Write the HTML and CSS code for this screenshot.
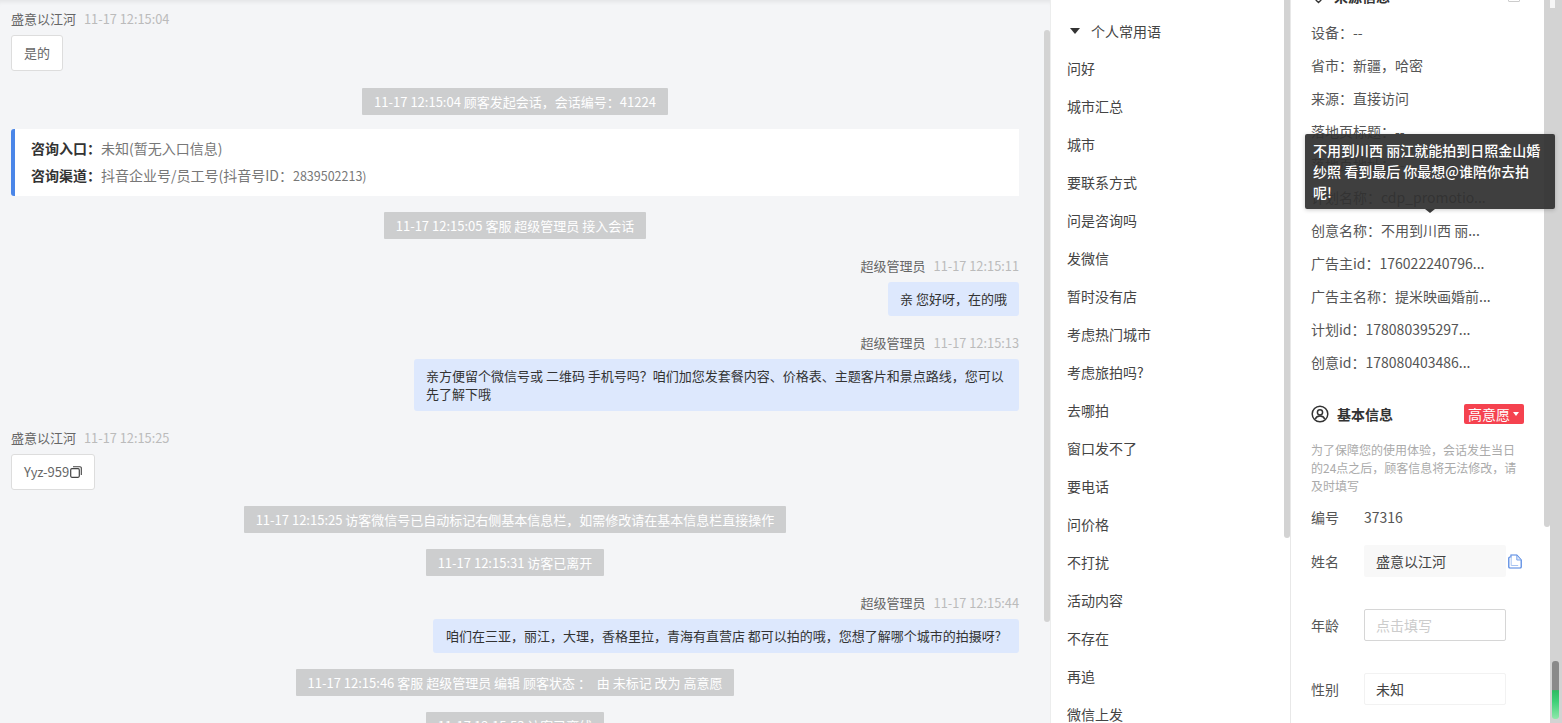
FILE: index.html
```html
<!DOCTYPE html>
<html lang="zh-CN">
<head>
<meta charset="utf-8">
<title>会话</title>
<link rel="stylesheet" href="styles.css">
</head>
<body>
<div class="app">
  <main class="chat">
    <div class="chat-scroll">
      <div class="who"><span class="name">盛意以江河</span><span class="time">11-17 12:15:04</span></div>
      <div class="row"><div class="bubble white">是的</div></div>
      <div class="sys sys-first"><span>11-17 12:15:04 顾客发起会话，会话编号：41224</span></div>
      <div class="entry">
        <p><b>咨询入口：</b>未知(暂无入口信息)</p>
        <p><b>咨询渠道：</b>抖音企业号/员工号(抖音号ID：<span class="num">2839502213)</span></p>
      </div>
      <div class="sys sys-b"><span>11-17 12:15:05 客服 超级管理员 接入会话</span></div>
      <div class="who right w1"><span class="name">超级管理员</span><span class="time">11-17 12:15:11</span></div>
      <div class="row right"><div class="bubble blue">亲 您好呀，在的哦</div></div>
      <div class="who right w2"><span class="name">超级管理员</span><span class="time">11-17 12:15:13</span></div>
      <div class="row right"><div class="bubble blue long">亲方便留个微信号或 二维码 手机号吗？咱们加您发套餐内容、价格表、主题客片和景点路线，您可以先了解下哦</div></div>
      <div class="who w3"><span class="name">盛意以江河</span><span class="time">11-17 12:15:25</span></div>
      <div class="row"><div class="bubble white">Yyz-959<svg class="copy" viewBox="0 0 12 12" width="12" height="12"><rect x="0.7" y="2.7" width="8.6" height="8.6" rx="1.2" fill="none" stroke="#444" stroke-width="1.2"/><path d="M3 .7h7a1.3 1.3 0 0 1 1.3 1.3v7" fill="none" stroke="#444" stroke-width="1.1"/></svg></div></div>
      <div class="sys sys-c"><span>11-17 12:15:25 访客微信号已自动标记右侧基本信息栏，如需修改请在基本信息栏直接操作</span></div>
      <div class="sys sys-d"><span>11-17 12:15:31 访客已离开</span></div>
      <div class="who right w4"><span class="name">超级管理员</span><span class="time">11-17 12:15:44</span></div>
      <div class="row right"><div class="bubble blue trail">咱们在三亚，丽江，大理，香格里拉，青海有直营店 都可以拍的哦，您想了解哪个城市的拍摄呀?</div></div>
      <div class="sys sys-e"><span>11-17 12:15:46 客服 超级管理员 编辑 顾客状态 ：&nbsp; 由 未标记 改为 高意愿</span></div>
      <div class="sys sys-d"><span>11-17 12:15:53 访客已离线</span></div>
    </div>
    <div class="bar bar-chat"></div>
  </main>

  <aside class="phrases">
    <div class="ph-head"><i class="caret"></i>个人常用语</div>
    <ul class="ph-list">
      <li>问好</li><li>城市汇总</li><li>城市</li><li>要联系方式</li><li>问是咨询吗</li><li>发微信</li><li>暂时没有店</li><li>考虑热门城市</li><li>考虑旅拍吗?</li><li>去哪拍</li><li>窗口发不了</li><li>要电话</li><li>问价格</li><li>不打扰</li><li>活动内容</li><li>不存在</li><li>再追</li><li>微信上发</li>
    </ul>
  </aside>
  <div class="gutter"><div class="thumb"></div></div>

  <section class="info">
    <div class="info-scroll">
      <h3 class="info-title cut"><svg viewBox="0 0 16 16" width="15" height="15"><path d="M8 1.5a5 5 0 0 1 5 5c0 3.500-5 8-5 8s-5-4.500-5-8a5 5 0 0 1 5-5z" fill="none" stroke="#333" stroke-width="1.500"/></svg>来源信息<i class="mini"></i></h3>
      <dl class="facts">
        <div><dt>设备：</dt><dd>--</dd></div>
        <div><dt>省市：</dt><dd>新疆，哈密</dd></div>
        <div><dt>来源：</dt><dd>直接访问</dd></div>
        <div><dt>落地页标题：</dt><dd>--</dd></div>
        <div><dt>落地页地址：</dt><dd>--</dd></div>
        <div><dt>计划名称：</dt><dd>cdp_promotio...</dd></div>
        <div><dt>创意名称：</dt><dd>不用到川西 丽...</dd></div>
        <div><dt>广告主id：</dt><dd>176022240796...</dd></div>
        <div><dt>广告主名称：</dt><dd>提米映画婚前...</dd></div>
        <div><dt>计划id：</dt><dd>178080395297...</dd></div>
        <div><dt>创意id：</dt><dd>178080403486...</dd></div>
      </dl>
      <div class="basic-head">
        <h3 class="info-title"><svg viewBox="0 0 18 18" width="18" height="18"><circle cx="9" cy="9" r="7.800" fill="none" stroke="#333" stroke-width="1.500"/><circle cx="9" cy="7.300" r="2.600" fill="none" stroke="#333" stroke-width="1.500"/><path d="M4.300 14c.8-2.200 2.500-3 4.700-3s3.900.8 4.700 3" fill="none" stroke="#333" stroke-width="1.500"/></svg>基本信息</h3>
        <span class="tag">高意愿<i></i></span>
      </div>
      <p class="hint">为了保障您的使用体验，会话发生当日的24点之后，顾客信息将无法修改，请及时填写</p>
      <div class="field plain"><label>编号</label><span>37316</span></div>
      <div class="field"><label>姓名</label><div class="input filled">盛意以江河</div><svg class="doc" viewBox="0 0 14 15" width="14" height="15"><path d="M3 3H1.800a1 1 0 0 0-1 1v9a1 1 0 0 0 1 1h10.400a1 1 0 0 0 1-1V6L8.800 1H3z" fill="#fff" stroke="#4a80e0" stroke-width="1.200"/><path d="M3.200 1.500v10h7" fill="none" stroke="#a9c4f1" stroke-width="1"/><path d="M8.800 1.500v4.500h4.200" fill="#dce8fb" stroke="#7ea6ea" stroke-width="1"/></svg></div>
      <div class="field"><label>年龄</label><div class="input empty">点击填写</div></div>
      <div class="field"><label>性别</label><div class="input soft">未知</div></div>
    </div>
    <div class="bar bar-info"></div>
    <div class="tip">不用到川西 丽江就能拍到日照金山婚纱照 看到最后 你最想@谁陪你去拍呢!</div>
  </section>
  <div class="rail"><i class="rail-top"></i><div class="meter"></div></div>
</div>
</body>
</html>
```
FILE: styles.css
```css
* { box-sizing: border-box; margin: 0; padding: 0; }
html, body { height: 100%; overflow: hidden; }
body { font-family: "Noto Sans CJK SC", "Open Sans", sans-serif; font-size: 13px; color: #333; background: #fff; }
.app { display: flex; height: 723px; width: 1562px; overflow: hidden; }

.chat { width: 1051px; flex: none; background: #f4f5f7; position: relative; overflow: hidden; border-right: 1px solid #eceded; box-shadow: inset 0 5px 4px -3px rgba(0,0,0,.07); }
.chat-scroll { padding: 10px 31px 0 11px; }
.bar { position: absolute; width: 6px; background: #d3d3d3; border-radius: 0 0 3px 3px; }
.bar-chat { left: 1044px; top: 30px; height: 592px; border-radius: 3px; }

.who { height: 18px; line-height: 18px; font-size: 13px; display: flex; gap: 8px; }
.who.right { justify-content: flex-end; }
.name { color: #666; }
.time { color: #bbb; font-size: 12.800px; }
.row { display: flex; margin-top: 7px; }
.row.right { justify-content: flex-end; }
.bubble { font-size: 13px; line-height: 18px; color: #333; padding: 8px 12px; border-radius: 3px; display: flex; align-items: center; }
.bubble.white { background: #fff; border: 1px solid #ddd; color: #666; padding: 8px 12px; height: 36px; }
.bubble.blue { background: #dde8fd; }
.bubble.long { width: 605px; }
.bubble.trail { padding: 8px 18px 8px 13px; }
.copy { margin-left: 1px; }

.sys { display: flex; justify-content: center; }
.sys span { background: #cdcecf; color: #fff; font-size: 13px; line-height: 27px; height: 27px; padding: 0 12px; border-radius: 1px; white-space: nowrap; }
.sys-first { margin-top: 17px; }
.sys-b { margin-top: 16px; }
.sys-c { margin-top: 16px; }
.sys-d { margin-top: 16px; }
.sys-e { margin-top: 16px; }

.entry { margin-top: 14px; height: 67px; background: #fff; border-left: 4px solid #4a86e8; border-radius: 3px 0 0 3px; padding: 6px 0 0 16px; font-size: 14px; color: #777; line-height: 27px; }
.entry b { color: #333; font-weight: 700; }
.num { font-size: 12.500px; }
.w1 { margin-top: 18px; }
.w2 { margin-top: 18px; }
.w3 { margin-top: 18px; }
.w4 { margin-top: 18px; }

.phrases { width: 233px; flex: none; background: #fff; padding: 21px 0 0 16px; overflow: hidden; }
.ph-head { height: 20px; line-height: 20px; padding-left: 24px; position: relative; font-size: 14px; color: #444; }
.caret { position: absolute; left: 3px; top: 7px; border: 5.500px solid transparent; border-top: 6px solid #333; border-bottom: 0; }
.ph-list { list-style: none; margin-top: 8px; }
.ph-list li { height: 38px; line-height: 38px; font-size: 14px; color: #444; white-space: nowrap; }

.gutter { width: 7px; flex: none; background: #fff; border-right: 1px solid #e8e8e8; }
.gutter .thumb { width: 6px; height: 538px; background: #d3d3d3; border-radius: 0 0 3px 3px; }

.info { width: 259px; flex: none; background: #fff; position: relative; z-index: 2; }
.info-scroll { padding: 0 0 0 20px; margin-top: -14px; }
.info-title { font-size: 14px; font-weight: 700; color: #333; display: flex; align-items: center; gap: 8px; height: 20px; line-height: 20px; }
.cut { margin-bottom: 10px; position: relative; }
.mini { position: absolute; left: 197px; top: 11px; width: 12px; height: 5px; border: 1px solid #ccc; border-radius: 1px; }
.facts div { display: flex; height: 33px; line-height: 33px; font-size: 14px; color: #555; white-space: nowrap; }
.facts dd { color: #555; }
.basic-head { display: flex; justify-content: space-between; align-items: center; margin-top: 24px; height: 22px; padding-right: 26px; }
.tag { background: #f5424f; color: #fff; border-radius: 2px; font-size: 14px; height: 20px; line-height: 20px; padding: 0 5px 0 4px; display: flex; align-items: center; }
.tag i { margin-left: 3px; border: 3.500px solid transparent; border-top: 4px solid #fff; border-bottom: 0; }
.hint { font-size: 12px; line-height: 18px; color: #aaa; width: 206px; margin-top: 16px; }
.field { display: flex; align-items: center; height: 34px; margin-top: 30px; font-size: 14px; color: #555; }
.field label { width: 53px; flex: none; }
.field.plain { margin-top: 9px; height: 26px; }
.field.plain + .field { margin-top: 14px; }
.input { width: 142px; height: 32px; line-height: 30px; padding-left: 11px; border-radius: 2px; border: 1px solid transparent; font-size: 14px; color: #444; }
.input.filled { background: #f8f8f8; }
.input.empty { border-color: #d6d6d6; color: #ccc; }
.input.soft { border-color: #f2f2f2; }
.doc { margin-left: 2px; }

.bar-info { left: 253px; top: 0; height: 527px; }
.tip { position: absolute; left: 14px; top: 134px; width: 250px; height: 75px; background: rgba(48,48,48,.93); color: #fff; font-size: 14px; font-weight: 500; line-height: 21px; padding: 6px 8px; border-radius: 2px; box-shadow: 0 1px 4px rgba(0,0,0,.2); z-index: 3; }
.tip::after { content: ""; position: absolute; left: 120px; top: 75px; border: 5px solid transparent; border-top: 4px solid #383838; border-bottom: 0; }

.rail { width: 12px; flex: none; background: #d3d3d3; position: relative; }
.rail-top { position: absolute; left: 0; top: 0; width: 5px; height: 8px; background: #f6f6f6; }
.meter { position: absolute; left: 2px; top: 661px; width: 7px; height: 58px; border-radius: 3px; background: linear-gradient(#8a8a8a 0 50%, #2dbb62 51%, #3fd078 70%, #8fe8ab 100%); }
```
